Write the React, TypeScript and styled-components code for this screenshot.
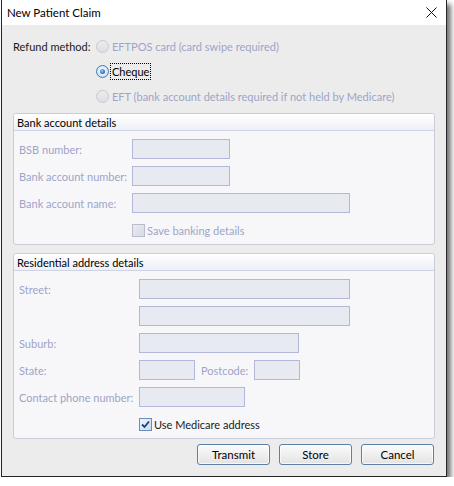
import React from "react";
import styled, { createGlobalStyle } from "styled-components";

const GlobalStyle = createGlobalStyle`
  html, body {
    margin: 0;
    padding: 0;
    background: #ffffff;
  }
  body {
    font-family: Lato, "Liberation Sans", sans-serif;
    font-size: 11px;
    color: #000;
  }
  * {
    box-sizing: border-box;
  }
`;

const DISABLED = "#9ea4c8";

const Window = styled.div`
  width: 446px;
  height: 477px;
  margin-left: 1px;
  border: 1px solid #262626;
  border-top: none;
  background: #ececec;
  box-shadow: 4px 4px 5px rgba(0, 0, 0, 0.55);
  display: flex;
  flex-direction: column;
`;

const TitleBar = styled.div`
  height: 25px;
  flex: none;
  background: #ffffff;
  display: flex;
  align-items: center;
  justify-content: space-between;
  padding: 0 9px 0 5px;
  font-size: 11.5px;
`;

const CloseIcon = () => (
  <svg width="11" height="11" viewBox="0 0 11 11">
    <path d="M0.5 0.5 L10.5 10.5 M10.5 0.5 L0.5 10.5" stroke="#111" strokeWidth="1" />
  </svg>
);

const Body = styled.div`
  flex: 1;
  display: flex;
  flex-direction: column;
  padding: 9px 11px 0 11px;
`;

const RefundGrid = styled.div`
  display: grid;
  grid-template-columns: 83px 1fr;
  grid-auto-rows: 25px;
  align-items: center;
`;

const FieldLabel = styled.span<{ $disabled?: boolean }>`
  color: ${(p) => (p.$disabled ? DISABLED : "#1a1a1a")};
  white-space: nowrap;
`;

const Option = styled.label`
  display: flex;
  align-items: center;
  gap: 1px;
  grid-column: 2;
`;

const Radio = styled.span<{ $checked?: boolean; $disabled?: boolean }>`
  position: relative;
  width: 13px;
  height: 13px;
  border-radius: 50%;
  flex: none;
  border: 1px solid ${(p) => (p.$checked ? "#3f7cb0" : "#c6c8d0")};
  background: ${(p) =>
    p.$checked
      ? "radial-gradient(circle at 50% 45%, #ffffff 0%, #d6e8f8 60%, #a9cbea 100%)"
      : "linear-gradient(#ececec, #dedfe3)"};

  &::after {
    content: "";
    display: ${(p) => (p.$checked ? "block" : "none")};
    position: absolute;
    left: 3px;
    top: 3px;
    width: 5px;
    height: 5px;
    border-radius: 50%;
    background: radial-gradient(circle at 40% 35%, #8fc1ee 0%, #2f6fb0 70%, #1d4f8a 100%);
  }
`;

const OptionText = styled.span<{ $disabled?: boolean; $focused?: boolean }>`
  color: ${(p) => (p.$disabled ? DISABLED : "#000")};
  line-height: 15px;
  padding: 0 1px;
  border: 1px dotted ${(p) => (p.$focused ? "#000" : "transparent")};
  white-space: nowrap;
`;

const Group = styled.section<{ $top: number }>`
  margin-top: ${(p) => p.$top}px;
  border: 1px solid #c9ccd9;
  border-radius: 3px;
  background: #f7f7fa;
  overflow: hidden;
`;

const GroupHeader = styled.div`
  height: 17px;
  padding-left: 3px;
  display: flex;
  align-items: center;
  background: linear-gradient(#ffffff, #eef0f7);
  border-bottom: 1px solid #cfd3e8;
  color: #000;
`;

const FormGrid = styled.div<{ $labelWidth: number }>`
  display: grid;
  grid-template-columns: ${(p) => p.$labelWidth}px 1fr;
  grid-auto-rows: 20px;
  row-gap: 7px;
  align-items: center;
  padding: 8px 5px 4px 5px;
`;

const Input = styled.div<{ $w: number }>`
  width: ${(p) => p.$w}px;
  height: 20px;
  background: #e8eaf2;
  border: 1px solid #b3b7d9;
`;

const InlineRow = styled.div`
  display: flex;
  align-items: center;
  gap: 6px;
`;

const CheckRow = styled.label`
  grid-column: 2;
  display: flex;
  align-items: center;
  gap: 2px;
`;

const Checkbox = styled.span<{ $checked?: boolean }>`
  width: 13px;
  height: 13px;
  flex: none;
  display: flex;
  align-items: center;
  justify-content: center;
  border: 1px solid ${(p) => (p.$checked ? "#6a8cb8" : "#b9bccb")};
  background: ${(p) =>
    p.$checked ? "linear-gradient(135deg, #eef5fc, #c7dcf1)" : "linear-gradient(135deg, #e9ebf1, #d7dae6)"};
`;

const Tick = () => (
  <svg width="9" height="9" viewBox="0 0 9 9">
    <path d="M1 4.5 L3.5 7 L8 1.5" fill="none" stroke="#1e3f7a" strokeWidth="1.8" />
  </svg>
);

const ButtonBar = styled.div`
  margin-top: 5px;
  display: flex;
  justify-content: flex-end;
  gap: 9px;
  padding-right: 1px;
`;

const Button = styled.button`
  width: 73px;
  height: 21px;
  padding: 0;
  font: inherit;
  font-size: 11.5px;
  color: #000;
  border: 1px solid #5b7fa9;
  border-radius: 3px;
  background: linear-gradient(#fbfbfb 0%, #efefef 50%, #e3e3e3 100%);
  box-shadow: inset 0 0 0 1px rgba(255, 255, 255, 0.7);
`;

export default function App() {
  return (
    <>
      <GlobalStyle />
      <Window>
        <TitleBar>
          <span>New Patient Claim</span>
          <CloseIcon />
        </TitleBar>
        <Body>
          <RefundGrid>
            <FieldLabel>Refund method:</FieldLabel>
            <Option>
              <Radio $disabled />
              <OptionText $disabled>EFTPOS card (card swipe required)</OptionText>
            </Option>
            <Option>
              <Radio $checked />
              <OptionText $focused>Cheque</OptionText>
            </Option>
            <Option>
              <Radio $disabled />
              <OptionText $disabled>EFT (bank account details required if not held by Medicare)</OptionText>
            </Option>
          </RefundGrid>

          <Group $top={4}>
            <GroupHeader>Bank account details</GroupHeader>
            <FormGrid $labelWidth={113}>
              <FieldLabel $disabled>BSB number:</FieldLabel>
              <Input $w={98} />
              <FieldLabel $disabled>Bank account number:</FieldLabel>
              <Input $w={98} />
              <FieldLabel $disabled>Bank account name:</FieldLabel>
              <Input $w={218} />
              <CheckRow>
                <Checkbox />
                <FieldLabel $disabled>Save banking details</FieldLabel>
              </CheckRow>
            </FormGrid>
          </Group>

          <Group $top={8}>
            <GroupHeader>Residential address details</GroupHeader>
            <FormGrid $labelWidth={120}>
              <FieldLabel $disabled>Street:</FieldLabel>
              <Input $w={211} />
              <span />
              <Input $w={211} />
              <FieldLabel $disabled>Suburb:</FieldLabel>
              <Input $w={160} />
              <FieldLabel $disabled>State:</FieldLabel>
              <InlineRow>
                <Input $w={56} />
                <FieldLabel $disabled>Postcode:</FieldLabel>
                <Input $w={46} />
              </InlineRow>
              <FieldLabel $disabled>Contact phone number:</FieldLabel>
              <Input $w={106} />
              <CheckRow>
                <Checkbox $checked>
                  <Tick />
                </Checkbox>
                <FieldLabel>Use Medicare address</FieldLabel>
              </CheckRow>
            </FormGrid>
          </Group>

          <ButtonBar>
            <Button>Transmit</Button>
            <Button>Store</Button>
            <Button>Cancel</Button>
          </ButtonBar>
        </Body>
      </Window>
    </>
  );
}
